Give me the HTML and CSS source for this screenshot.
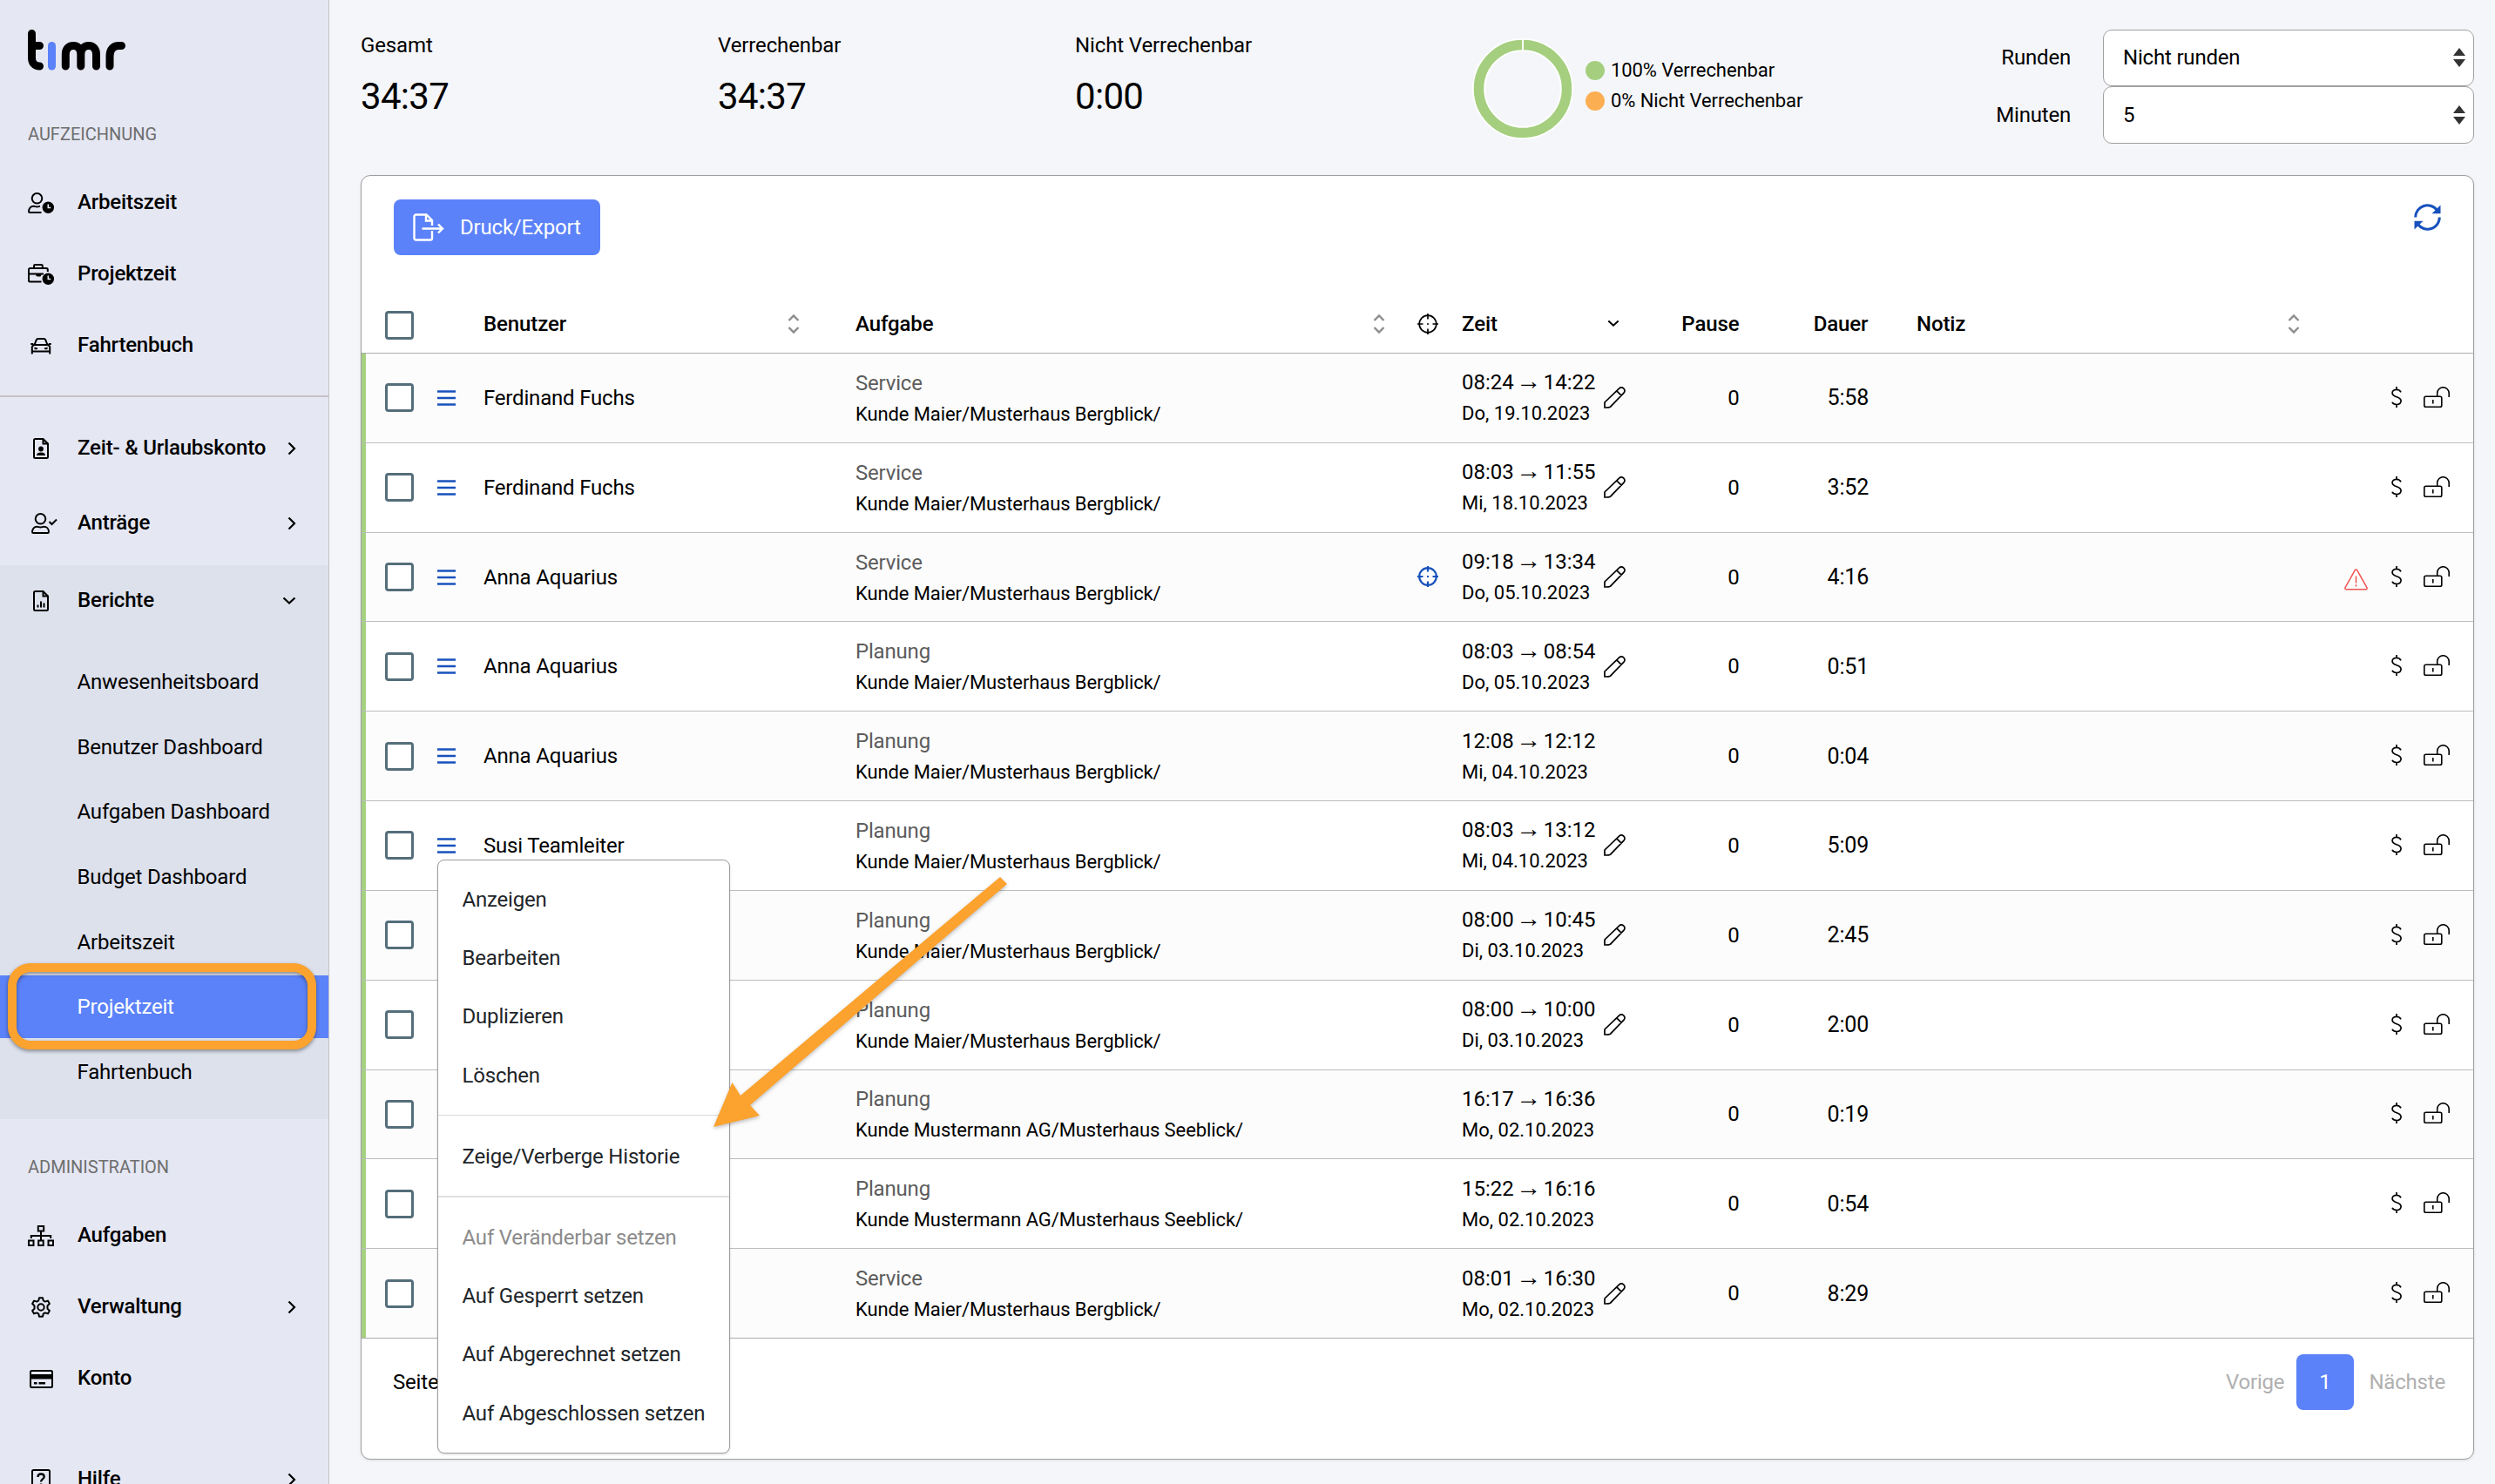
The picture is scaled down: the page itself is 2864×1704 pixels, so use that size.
FILE: index.html
```html
<!DOCTYPE html>
<html lang="de">
<head>
<meta charset="utf-8">
<title>timr – Projektzeit</title>
<link rel="stylesheet" href="styles.css">
</head>
<body>
<svg class="sprite" aria-hidden="true">
  <symbol id="chev-right" viewBox="0 0 10 16"><path d="M1.5 1.5 8 8l-6.500 6.500" fill="none" stroke="currentColor" stroke-width="2.200"/></symbol>
  <symbol id="chev-down" viewBox="0 0 16 10"><path d="M1.500 1.500 8 7.500l6.500-6" fill="none" stroke="currentColor" stroke-width="2.300"/></symbol>
  <symbol id="sort" viewBox="0 0 14 24"><path d="M1.500 8 7 2.500 12.500 8M1.500 16 7 21.500l5.500-5.500" fill="none" stroke="currentColor" stroke-width="2.400"/></symbol>
  <symbol id="menu" viewBox="0 0 21 18"><path d="M0 1.500h21M0 9h21M0 16.500h21" stroke="currentColor" stroke-width="2.600"/></symbol>
  <symbol id="target" viewBox="0 0 24 24"><g fill="none" stroke="currentColor"><circle cx="12" cy="12" r="9.800"/><path d="M12 0v6.500M12 17.500V24M0 12h6.500M17.500 12H24M11 12h2"/></g></symbol>
  <symbol id="pencil" viewBox="0 0 25 25"><path d="M1 24v-6L17.800 1.900a3.300 3.300 0 0 1 4.700 0l.5.5a3.300 3.300 0 0 1 0 4.700L7.500 23.200C5.500 24.200 3 24 1 24zM14.800 4.800l5.500 5.500" fill="none" stroke="currentColor" stroke-width="1.700"/></symbol>
  <symbol id="dollar" viewBox="0 0 12 24"><path d="M11 6.300C10 4 8 3.300 6 3.300c-3 0-4.900 1.600-4.900 4 0 5.700 10 3.200 10 9 0 2.700-2.100 4.200-5.100 4.200-2.400 0-4.300-.9-5-2.700M6 0v3.500M6 20.500V24" fill="none" stroke="currentColor" stroke-width="1.700"/></symbol>
  <symbol id="lock" viewBox="0 0 30 24"><g fill="none" stroke="currentColor" stroke-width="1.600"><rect x=".8" y="11.300" width="20" height="11.900" rx="1.800"/><path d="M15.700 11V7.500a6.700 6.700 0 0 1 13.500 0V12M10.800 15v4.500"/></g></symbol>
  <symbol id="warn" viewBox="0 0 27 25"><path d="M12.300 1.700a1.400 1.400 0 0 1 2.400 0l11.200 20a1.400 1.400 0 0 1-1.200 2.100H2.300a1.400 1.400 0 0 1-1.200-2.100zM13.500 8.500v8M13.500 18.300v2.200" fill="none" stroke="currentColor" stroke-width="1.500"/></symbol>
  <symbol id="updown" viewBox="0 0 14 22"><path d="M7 0l7 9H0zM7 22l7-9H0z" fill="currentColor"/></symbol>
  <symbol id="refresh" viewBox="0 0 31 31"><g fill="none" stroke="currentColor" stroke-width="3"><path d="M1.700 15.500A13.700 13.700 0 0 1 26.500 7.500M29.300 15.500A13.700 13.700 0 0 1 4.500 23.500"/></g><path d="M30.500 1.500v9.800H20.500zM.5 29.500v-9.800h10z" fill="currentColor"/></symbol>
  <symbol id="export" viewBox="0 0 36 32"><path d="M22 20v8.500a2 2 0 0 1-2 2H3.500a2 2 0 0 1-2-2v-25a2 2 0 0 1 2-2h12L22 8v6M15 1.500v7h7M10.500 17.500H34M29 12.500l5 5-5 5" fill="none" stroke="currentColor" stroke-width="2.400"/></symbol>
  <symbol id="user-clock" viewBox="0 0 30 24"><g fill="none" stroke="currentColor" stroke-width="2"><circle cx="10.500" cy="6.800" r="5.800"/><path d="M15.500 23H2.200A1.200 1.200 0 0 1 1 21.800C1 18 3.500 15.700 6.500 15.700c1.500 0 2.500.8 4 .8s2.500-.5 3.500-.8"/></g><circle cx="23.300" cy="17.300" r="6.700" fill="currentColor"/><path d="M23.300 13.500v4h3" fill="none" stroke="#e5e7f3" stroke-width="1.600"/></symbol>
  <symbol id="case-clock" viewBox="0 0 30 24"><g fill="none" stroke="currentColor" stroke-width="2"><path d="M15.500 20.500H2.500A1.500 1.500 0 0 1 1 19V6.500A1.500 1.500 0 0 1 2.500 5h18.800A1.500 1.500 0 0 1 22.800 6.500V9M7 5V2.200A1.200 1.200 0 0 1 8.200 1h7.400a1.200 1.200 0 0 1 1.200 1.200V5M1 11.500h17M9 12.500h6"/></g><path d="M9 11.500h7l-1.500 3h-4z" fill="currentColor"/><circle cx="23.300" cy="17.300" r="6.700" fill="currentColor"/><path d="M23.300 13.500v4h3" fill="none" stroke="#e5e7f3" stroke-width="1.600"/></symbol>
  <symbol id="car" viewBox="0 0 24 19"><path d="M1.800 18.500V10.500a2 2 0 0 1 1-1.700L4.500 8 6.800 2.200A2 2 0 0 1 8.600 1h6.800a2 2 0 0 1 1.800 1.200L19.500 8l1.700.8a2 2 0 0 1 1 1.700v8M1.800 15.500h20.400M4.500 8h15M.3 7h3M20.700 7h3" fill="none" stroke="currentColor" stroke-width="2"/><path d="M4.500 10.500l4 1.200-1 1.500h-3zM19.500 10.500l-4 1.200 1 1.500h3z" fill="currentColor"/></symbol>
  <symbol id="file-user" viewBox="0 0 18 24"><path d="M11.500 1H2.500A1.500 1.500 0 0 0 1 2.500v19A1.500 1.500 0 0 0 2.500 23h13a1.500 1.500 0 0 0 1.500-1.500V6.500zM11.500 1v5.500H17" fill="none" stroke="currentColor" stroke-width="2"/><circle cx="9" cy="12.500" r="2.900" fill="currentColor"/><path d="M4 20c0-2.500 2-3.500 5-3.500s5 1 5 3.500z" fill="currentColor"/></symbol>
  <symbol id="file-chart" viewBox="0 0 18 24"><path d="M11.500 1H2.500A1.500 1.500 0 0 0 1 2.500v19A1.500 1.500 0 0 0 2.500 23h13a1.500 1.500 0 0 0 1.500-1.500V6.500zM11.500 1v5.500H17" fill="none" stroke="currentColor" stroke-width="2"/><path d="M4.500 16.500h2v3h-2zM8 12.500h2v7H8zM11.500 14.500h2v5h-2z" fill="currentColor"/></symbol>
  <symbol id="user-check" viewBox="0 0 30 24"><g fill="none" stroke="currentColor" stroke-width="2"><circle cx="10.500" cy="6.800" r="5.800"/><path d="M6.500 15.700c1.500 0 2.500.8 4 .8s2.500-.8 4-.8c3 0 5.500 2.300 5.500 6.100A1.200 1.200 0 0 1 18.800 23H2.200A1.200 1.200 0 0 1 1 21.800C1 18 3.500 15.700 6.500 15.700zM20.500 10l3 3 5.500-5.500"/></g></symbol>
  <symbol id="sitemap" viewBox="0 0 30 24"><path d="M11.800 1h6.400v5.500h-6.400zM1 17.500h5.500V23H1zM12.200 17.500h5.500V23h-5.500zM23.500 17.500H29V23h-5.500zM15 6.500v11M3.800 15v-3h22.400v3" fill="none" stroke="currentColor" stroke-width="2"/></symbol>
  <symbol id="gear" viewBox="0 0 24 24"><g fill="none" stroke="currentColor" stroke-width="2"><circle cx="12" cy="12" r="3.700"/><path d="M10 1.200h4l.7 3.200 2 1.200 3.200-1 2 3.500-2.400 2.200v3.400l2.400 2.200-2 3.500-3.200-1-2 1.200-.7 3.200h-4l-.7-3.200-2-1.200-3.200 1-2-3.500 2.400-2.200v-3.400L2.100 8.100l2-3.500 3.200 1 2-1.200z" stroke-linejoin="round"/></g></symbol>
  <symbol id="card" viewBox="0 0 27 21"><rect x="1" y="1" width="25" height="19" rx="1.500" fill="none" stroke="currentColor" stroke-width="2"/><path d="M1 5h25v5.500H1zM5 14h3.500v2.500H5zM10.500 14h7.500v2.500h-7.500z" fill="currentColor"/></symbol>
  <symbol id="help" viewBox="0 0 22 24"><rect x="1" y="1" width="20" height="22" rx="1.500" fill="none" stroke="currentColor" stroke-width="2"/><path d="M7.500 9c0-2.500 1.500-3.500 3.500-3.500s3.700 1.200 3.700 3.200c0 2.600-3.700 2.800-3.700 5.800M11 16.500v2.500" fill="none" stroke="currentColor" stroke-width="2.300"/></symbol>
</svg>

<div class="app">
  <nav class="sidebar">
    <svg class="logo" viewBox="0 0 112 47" fill="none" stroke-width="9" stroke-linecap="round"><path d="M4.500 4.500v28c0 6 3.500 9.500 9 9.500M4.500 18.500h9M43.300 42V28.500c0-6 3-10 9-10 5.500 0 8.500 4 8.500 10V42M60.800 28.500c0-6 3.500-10 9-10s8.700 4 8.700 10V42M94 42V30.500c0-8 4-12 10.500-12h3" stroke="#000"/><path d="M27.500 18.500V42" stroke="#5b82f9"/></svg>
    <div class="nav-title">AUFZEICHNUNG</div>
    <a class="nav-item"><span class="ico"><svg width="30" height="24"><use href="#user-clock"/></svg></span>Arbeitszeit</a>
    <a class="nav-item"><span class="ico"><svg width="30" height="24"><use href="#case-clock"/></svg></span>Projektzeit</a>
    <a class="nav-item"><span class="ico"><svg width="24" height="19"><use href="#car"/></svg></span>Fahrtenbuch</a>
    <div class="nav-line"></div>
    <a class="nav-item tall"><span class="ico"><svg width="18" height="24"><use href="#file-user"/></svg></span>Zeit- &amp; Urlaubskonto<svg class="chev" width="10" height="16"><use href="#chev-right"/></svg></a>
    <a class="nav-item tall"><span class="ico wide"><svg width="30" height="24"><use href="#user-check"/></svg></span>Anträge<svg class="chev" width="10" height="16"><use href="#chev-right"/></svg></a>
    <div class="nav-group">
      <a class="nav-item open"><span class="ico"><svg width="18" height="24"><use href="#file-chart"/></svg></span>Berichte<svg class="chev" width="16" height="10"><use href="#chev-down"/></svg></a>
      <div class="sub">
        <a>Anwesenheitsboard</a>
        <a>Benutzer Dashboard</a>
        <a>Aufgaben Dashboard</a>
        <a>Budget Dashboard</a>
        <a>Arbeitszeit</a>
        <a class="active">Projektzeit</a>
        <a>Fahrtenbuch</a>
      </div>
    </div>
    <div class="nav-title admin">ADMINISTRATION</div>
    <a class="nav-item"><span class="ico"><svg width="30" height="24"><use href="#sitemap"/></svg></span>Aufgaben</a>
    <a class="nav-item"><span class="ico"><svg width="24" height="24"><use href="#gear"/></svg></span>Verwaltung<svg class="chev" width="10" height="16"><use href="#chev-right"/></svg></a>
    <a class="nav-item"><span class="ico"><svg width="27" height="21"><use href="#card"/></svg></span>Konto</a>
    <a class="nav-item last"><span class="ico"><svg width="22" height="24"><use href="#help"/></svg></span>Hilfe<svg class="chev" width="10" height="16"><use href="#chev-right"/></svg></a>
  </nav>

  <main class="main">
    <header class="summary">
      <div class="stat"><span>Gesamt</span><strong>34:37</strong></div>
      <div class="stat"><span>Verrechenbar</span><strong>34:37</strong></div>
      <div class="stat"><span>Nicht Verrechenbar</span><strong>0:00</strong></div>
      <div class="chart">
        <svg width="118" height="118" viewBox="0 0 118 118"><circle cx="59" cy="59" r="50.500" fill="none" stroke="#fff" stroke-width="15"/><circle cx="59" cy="59" r="50.500" fill="none" stroke="#a5cf7f" stroke-width="11.500"/><path d="M59 1v15" stroke="#fff" stroke-width="2"/></svg>
        <ul class="legend">
          <li><i class="dot green"></i>100% Verrechenbar</li>
          <li><i class="dot orange"></i>0% Nicht Verrechenbar</li>
        </ul>
      </div>
      <div class="rounding">
        <label>Runden</label><div class="select">Nicht runden<svg width="14" height="22"><use href="#updown"/></svg></div>
        <label>Minuten</label><div class="select">5<svg width="14" height="22"><use href="#updown"/></svg></div>
      </div>
    </header>

    <section class="card">
      <div class="toolbar">
        <button class="export"><svg width="36" height="32"><use href="#export"/></svg>Druck/Export</button>
        <svg class="refresh" width="31" height="31"><use href="#refresh"/></svg>
      </div>
      <div class="row head">
        <div class="c-check"><i class="box"></i></div><div></div>
        <div class="c-user">Benutzer<svg class="sort" width="14" height="24"><use href="#sort"/></svg></div>
        <div class="c-task">Aufgabe<svg class="sort" width="14" height="24"><use href="#sort"/></svg></div>
        <div class="c-gps"><svg width="24" height="24" stroke-width="1.700"><use href="#target"/></svg></div>
        <div class="c-time">Zeit<svg class="sort down" width="14" height="9"><use href="#chev-down"/></svg></div>
        <div class="c-num">Pause</div><div class="c-num">Dauer</div>
        <div class="c-note">Notiz<svg class="sort" width="14" height="24"><use href="#sort"/></svg></div><div></div>
      </div>
      <div class="rows">
        <div class="row"><div class="c-check"><i class="box"></i></div><div class="c-menu"><svg width="21" height="18"><use href="#menu"/></svg></div><div class="c-user">Ferdinand Fuchs</div><div class="c-task"><p><b>Service</b><small>Kunde Maier/Musterhaus Bergblick/</small></p></div><div class="c-gps"></div><div class="c-time"><p>08:24<i class="to">→</i>14:22<small>Do, 19.10.2023</small></p><svg class="pen" width="25" height="25"><use href="#pencil"/></svg></div><div class="c-num">0</div><div class="c-num dur">5:58</div><div class="c-note"></div><div class="c-icons"><svg width="12" height="24"><use href="#dollar"/></svg><svg width="30" height="24"><use href="#lock"/></svg></div></div>
        <div class="row"><div class="c-check"><i class="box"></i></div><div class="c-menu"><svg width="21" height="18"><use href="#menu"/></svg></div><div class="c-user">Ferdinand Fuchs</div><div class="c-task"><p><b>Service</b><small>Kunde Maier/Musterhaus Bergblick/</small></p></div><div class="c-gps"></div><div class="c-time"><p>08:03<i class="to">→</i>11:55<small>Mi, 18.10.2023</small></p><svg class="pen" width="25" height="25"><use href="#pencil"/></svg></div><div class="c-num">0</div><div class="c-num dur">3:52</div><div class="c-note"></div><div class="c-icons"><svg width="12" height="24"><use href="#dollar"/></svg><svg width="30" height="24"><use href="#lock"/></svg></div></div>
        <div class="row"><div class="c-check"><i class="box"></i></div><div class="c-menu"><svg width="21" height="18"><use href="#menu"/></svg></div><div class="c-user">Anna Aquarius</div><div class="c-task"><p><b>Service</b><small>Kunde Maier/Musterhaus Bergblick/</small></p></div><div class="c-gps on"><svg width="24" height="24" stroke-width="2.200"><use href="#target"/></svg></div><div class="c-time"><p>09:18<i class="to">→</i>13:34<small>Do, 05.10.2023</small></p><svg class="pen" width="25" height="25"><use href="#pencil"/></svg></div><div class="c-num">0</div><div class="c-num dur">4:16</div><div class="c-note"></div><div class="c-icons"><svg class="alert" width="27" height="25"><use href="#warn"/></svg><svg width="12" height="24"><use href="#dollar"/></svg><svg width="30" height="24"><use href="#lock"/></svg></div></div>
        <div class="row"><div class="c-check"><i class="box"></i></div><div class="c-menu"><svg width="21" height="18"><use href="#menu"/></svg></div><div class="c-user">Anna Aquarius</div><div class="c-task"><p><b>Planung</b><small>Kunde Maier/Musterhaus Bergblick/</small></p></div><div class="c-gps"></div><div class="c-time"><p>08:03<i class="to">→</i>08:54<small>Do, 05.10.2023</small></p><svg class="pen" width="25" height="25"><use href="#pencil"/></svg></div><div class="c-num">0</div><div class="c-num dur">0:51</div><div class="c-note"></div><div class="c-icons"><svg width="12" height="24"><use href="#dollar"/></svg><svg width="30" height="24"><use href="#lock"/></svg></div></div>
        <div class="row"><div class="c-check"><i class="box"></i></div><div class="c-menu"><svg width="21" height="18"><use href="#menu"/></svg></div><div class="c-user">Anna Aquarius</div><div class="c-task"><p><b>Planung</b><small>Kunde Maier/Musterhaus Bergblick/</small></p></div><div class="c-gps"></div><div class="c-time"><p>12:08<i class="to">→</i>12:12<small>Mi, 04.10.2023</small></p></div><div class="c-num">0</div><div class="c-num dur">0:04</div><div class="c-note"></div><div class="c-icons"><svg width="12" height="24"><use href="#dollar"/></svg><svg width="30" height="24"><use href="#lock"/></svg></div></div>
        <div class="row"><div class="c-check"><i class="box"></i></div><div class="c-menu"><svg width="21" height="18"><use href="#menu"/></svg></div><div class="c-user">Susi Teamleiter</div><div class="c-task"><p><b>Planung</b><small>Kunde Maier/Musterhaus Bergblick/</small></p></div><div class="c-gps"></div><div class="c-time"><p>08:03<i class="to">→</i>13:12<small>Mi, 04.10.2023</small></p><svg class="pen" width="25" height="25"><use href="#pencil"/></svg></div><div class="c-num">0</div><div class="c-num dur">5:09</div><div class="c-note"></div><div class="c-icons"><svg width="12" height="24"><use href="#dollar"/></svg><svg width="30" height="24"><use href="#lock"/></svg></div></div>
        <div class="row"><div class="c-check"><i class="box"></i></div><div class="c-menu"></div><div class="c-user"></div><div class="c-task"><p><b>Planung</b><small>Kunde Maier/Musterhaus Bergblick/</small></p></div><div class="c-gps"></div><div class="c-time"><p>08:00<i class="to">→</i>10:45<small>Di, 03.10.2023</small></p><svg class="pen" width="25" height="25"><use href="#pencil"/></svg></div><div class="c-num">0</div><div class="c-num dur">2:45</div><div class="c-note"></div><div class="c-icons"><svg width="12" height="24"><use href="#dollar"/></svg><svg width="30" height="24"><use href="#lock"/></svg></div></div>
        <div class="row"><div class="c-check"><i class="box"></i></div><div class="c-menu"></div><div class="c-user"></div><div class="c-task"><p><b>Planung</b><small>Kunde Maier/Musterhaus Bergblick/</small></p></div><div class="c-gps"></div><div class="c-time"><p>08:00<i class="to">→</i>10:00<small>Di, 03.10.2023</small></p><svg class="pen" width="25" height="25"><use href="#pencil"/></svg></div><div class="c-num">0</div><div class="c-num dur">2:00</div><div class="c-note"></div><div class="c-icons"><svg width="12" height="24"><use href="#dollar"/></svg><svg width="30" height="24"><use href="#lock"/></svg></div></div>
        <div class="row"><div class="c-check"><i class="box"></i></div><div class="c-menu"></div><div class="c-user"></div><div class="c-task"><p><b>Planung</b><small>Kunde Mustermann AG/Musterhaus Seeblick/</small></p></div><div class="c-gps"></div><div class="c-time"><p>16:17<i class="to">→</i>16:36<small>Mo, 02.10.2023</small></p></div><div class="c-num">0</div><div class="c-num dur">0:19</div><div class="c-note"></div><div class="c-icons"><svg width="12" height="24"><use href="#dollar"/></svg><svg width="30" height="24"><use href="#lock"/></svg></div></div>
        <div class="row"><div class="c-check"><i class="box"></i></div><div class="c-menu"></div><div class="c-user"></div><div class="c-task"><p><b>Planung</b><small>Kunde Mustermann AG/Musterhaus Seeblick/</small></p></div><div class="c-gps"></div><div class="c-time"><p>15:22<i class="to">→</i>16:16<small>Mo, 02.10.2023</small></p></div><div class="c-num">0</div><div class="c-num dur">0:54</div><div class="c-note"></div><div class="c-icons"><svg width="12" height="24"><use href="#dollar"/></svg><svg width="30" height="24"><use href="#lock"/></svg></div></div>
        <div class="row"><div class="c-check"><i class="box"></i></div><div class="c-menu"></div><div class="c-user"></div><div class="c-task"><p><b>Service</b><small>Kunde Maier/Musterhaus Bergblick/</small></p></div><div class="c-gps"></div><div class="c-time"><p>08:01<i class="to">→</i>16:30<small>Mo, 02.10.2023</small></p><svg class="pen" width="25" height="25"><use href="#pencil"/></svg></div><div class="c-num">0</div><div class="c-num dur">8:29</div><div class="c-note"></div><div class="c-icons"><svg width="12" height="24"><use href="#dollar"/></svg><svg width="30" height="24"><use href="#lock"/></svg></div></div>
      </div>
      <footer class="pager"><span class="page-label">Seite</span><span class="off">Vorige</span><span class="page">1</span><span class="off">Nächste</span></footer>
    </section>
  </main>

  <div class="menu">
    <a>Anzeigen</a><a>Bearbeiten</a><a>Duplizieren</a><a>Löschen</a>
    <hr class="thin">
    <a>Zeige/Verberge Historie</a>
    <hr>
    <a class="disabled">Auf Veränderbar setzen</a><a>Auf Gesperrt setzen</a><a>Auf Abgerechnet setzen</a><a>Auf Abgeschlossen setzen</a>
  </div>
  <svg class="arrow" width="350" height="300" viewBox="0 0 350 300"><path d="M5 289 26.500 238 36 253 334 2 342 10 47 264 58 276z" fill="#fca22e"/></svg>
  <div class="highlight"></div>
</div>
</body>
</html>
```

FILE: styles.css
```css
* { box-sizing: border-box; }
body { margin: 0; font: 24px Roboto, "Liberation Sans", sans-serif; letter-spacing: -0.19px; color: #000; background: #f5f6f9; }
p, ul { margin: 0; padding: 0; list-style: none; }
svg { display: block; flex: none; }
.sprite { position: absolute; width: 0; height: 0; }

.app { position: relative; display: flex; width: 2864px; height: 1704px; overflow: hidden; }

/* Sidebar */
.sidebar { width: 378px; height: 1704px; overflow: hidden; background: #e5e7f3; border-right: 1px solid #c2c2c4; flex: none; }
.logo { width: 112px; height: 47px; margin: 34px 0 0 32px; }
.nav-title { height: 30px; margin: 58px 0 22px 32px; line-height: 30px; font-size: 20px; letter-spacing: 0; color: #6e6e6e; }
.nav-title.admin { margin: 40px 0 22px 32px; }
.nav-item { display: flex; align-items: center; height: 82px; padding: 0 37px 0 32px; font-weight: 500; white-space: nowrap; }
.nav-item.tall { height: 86px; }
.nav-item.open { height: 80px; }
.nav-item.last { margin-top: 34px; }
.ico { display: flex; justify-content: center; width: 30px; margin-right: 27px; padding-top: 2px; }
.ico.wide { width: 34px; justify-content: flex-end; margin-right: 23px; }
.chev { margin-left: auto; position: relative; top: 1px; }
.nav-line { height: 2px; margin: 17px 0 15px; background: #c4c3c2; }
.nav-group { height: 636px; margin-top: 6px; background: #dde1ec; }
.sub { display: flex; flex-direction: column; gap: 2.670px; padding-top: 18px; }
.sub a { height: 72px; line-height: 72px; padding-left: 88.500px; }
.sub .active { background: #5b82f9; color: #fff; }

/* Summary */
.main { flex: 1; padding: 0 24px 0 36px; }
.summary { display: flex; height: 201px; }
.stat { width: 410px; padding-top: 38px; }
.stat span { display: block; line-height: 28px; letter-spacing: -0.12px; }
.stat strong { display: block; margin-top: 20px; line-height: 50px; font-size: 42px; font-weight: 400; letter-spacing: -0.7px; }
.chart { display: flex; margin-left: 45px; padding-top: 43px; }
.legend { padding: 20px 0 0 13px; font-size: 22px; letter-spacing: -0.08px; }
.legend li { display: flex; align-items: center; height: 35px; }
.dot { width: 22px; height: 22px; margin-right: 7px; border-radius: 50%; }
.green { background: #a5cf7f; }
.orange { background: #fcae52; }
.rounding { display: grid; grid-template-columns: auto 426px; grid-template-rows: 65px 66px; align-content: start; column-gap: 37px; margin-left: auto; padding-top: 34px; align-items: center; text-align: right; }
.rounding label { padding-bottom: 1px; }
.select { display: flex; align-items: center; justify-content: space-between; height: 100%; padding: 0 9px 1px 22px; background: #fff; border: 1px solid #a0a0a0; border-radius: 10px; }
.select svg { color: #333; }

/* Table card */
.card { height: 1475px; background: #fff; border: 1px solid #9e9e9e; border-radius: 11px; box-shadow: 0 1px 3px rgba(0,0,0,.1); }
.toolbar { display: flex; justify-content: space-between; height: 128px; padding: 27px 37px 0; }
.export { display: flex; align-items: center; width: 237px; height: 64px; padding: 0 0 0 22px; gap: 18px; border: 0; border-radius: 8px; background: #5b82f9; color: #fff; font: inherit; letter-spacing: -0.2px; }
.refresh { margin-top: 5px; color: #1751bd; }
.row { display: grid; grid-template-columns: 73px 53px 426px 648px 48px 218px 130px 148px 489px 1fr; border-bottom: 1px solid #bdbdbd; }
.row > div { display: flex; align-items: center; white-space: nowrap; }
.head { height: 76px; font-weight: 500; letter-spacing: -0.1px; border-color: #adadad; }
.head > div { padding-top: 8px; }
.rows { display: grid; grid-template-rows: repeat(11, 1fr); height: 1131px; }
.rows .row { box-shadow: inset 5px 0 #a5d180; }
.rows .row:nth-child(odd) { background: #fcfcfc; }
.rows .row:last-child { border-color: #adadad; }
.box { width: 33px; height: 33px; border: 3px solid #546e7a; border-radius: 4px; background: #fff; }
.row .c-check { padding-left: 27px; }
.head .c-check { padding-top: 12px; }
.c-menu { padding-left: 14px; color: #1751bd; }
.c-user { padding: 0 49px 0 14px; }
.c-task { padding: 0 25px 0 15px; }
.row .c-gps { justify-content: center; }
.rows .c-gps { color: #1751bd; padding-bottom: 2px; }
.c-time { padding: 0 22px 0 15px; }
.c-time p { line-height: 36px; padding-top: 1px; letter-spacing: 0; }
.c-task p { line-height: 36px; padding-top: 2px; }
.c-task b { display: block; font-weight: 400; color: #5c5c5c; }
.rows small { display: block; font-size: 22px; }
.c-task small { letter-spacing: -0.1px; }
.to { display: inline-block; width: 34px; text-align: center; font-style: normal; font-family: "Liberation Serif", serif; font-size: 29px; line-height: 20px; }
.pen { margin-left: 9px; }
.row .c-num { justify-content: flex-end; padding-right: 14.500px; }
.rows .dur { font-size: 25px; padding-right: 14px; }
.c-note { padding: 0 8px 0 41px; }
.rows .c-icons { justify-content: flex-end; gap: 25px; padding-right: 27.500px; padding-bottom: 2px; }
.alert { color: #ef5350; position: relative; top: 4px; margin-right: 2px; }
.sort { margin-left: auto; color: #8c8c8c; }
.sort.down { color: #000; }
.pager { display: flex; align-items: center; height: 64px; margin-top: 18px; padding: 0 32px 0 36px; }
.page-label { margin-right: auto; }
.off { color: #b0b0b0; }
.page { width: 66px; height: 64px; margin: 0 17.500px 0 13.500px; line-height: 64px; text-align: center; color: #fff; background: #5b82f9; border-radius: 8px; }

/* Overlays */
.menu { position: absolute; left: 502px; top: 987px; width: 336px; height: 682px; padding-top: 12px; background: #fff; border: 1px solid #9e9e9e; border-radius: 8px; box-shadow: 0 1px 3px rgba(0,0,0,.15); color: #212529; }
.menu a { display: block; height: 67.200px; line-height: 67.200px; padding-left: 27.500px; }
.menu .disabled { color: #8b8b8b; }
.menu hr { height: 2px; margin: 11px 0 13px; border: 0; background: #e0e0e0; }
.menu .thin { height: 1px; margin-bottom: 14px; background: #dadada; }
.arrow { position: absolute; left: 814px; top: 1005px; filter: drop-shadow(0 2px 2px rgba(0,0,0,.25)); }
.highlight { position: absolute; left: 9px; top: 1106px; width: 354px; height: 99px; border: 10px solid #fca22e; border-radius: 26px; filter: drop-shadow(0 2px 2px rgba(0,0,0,.4)); }
```
